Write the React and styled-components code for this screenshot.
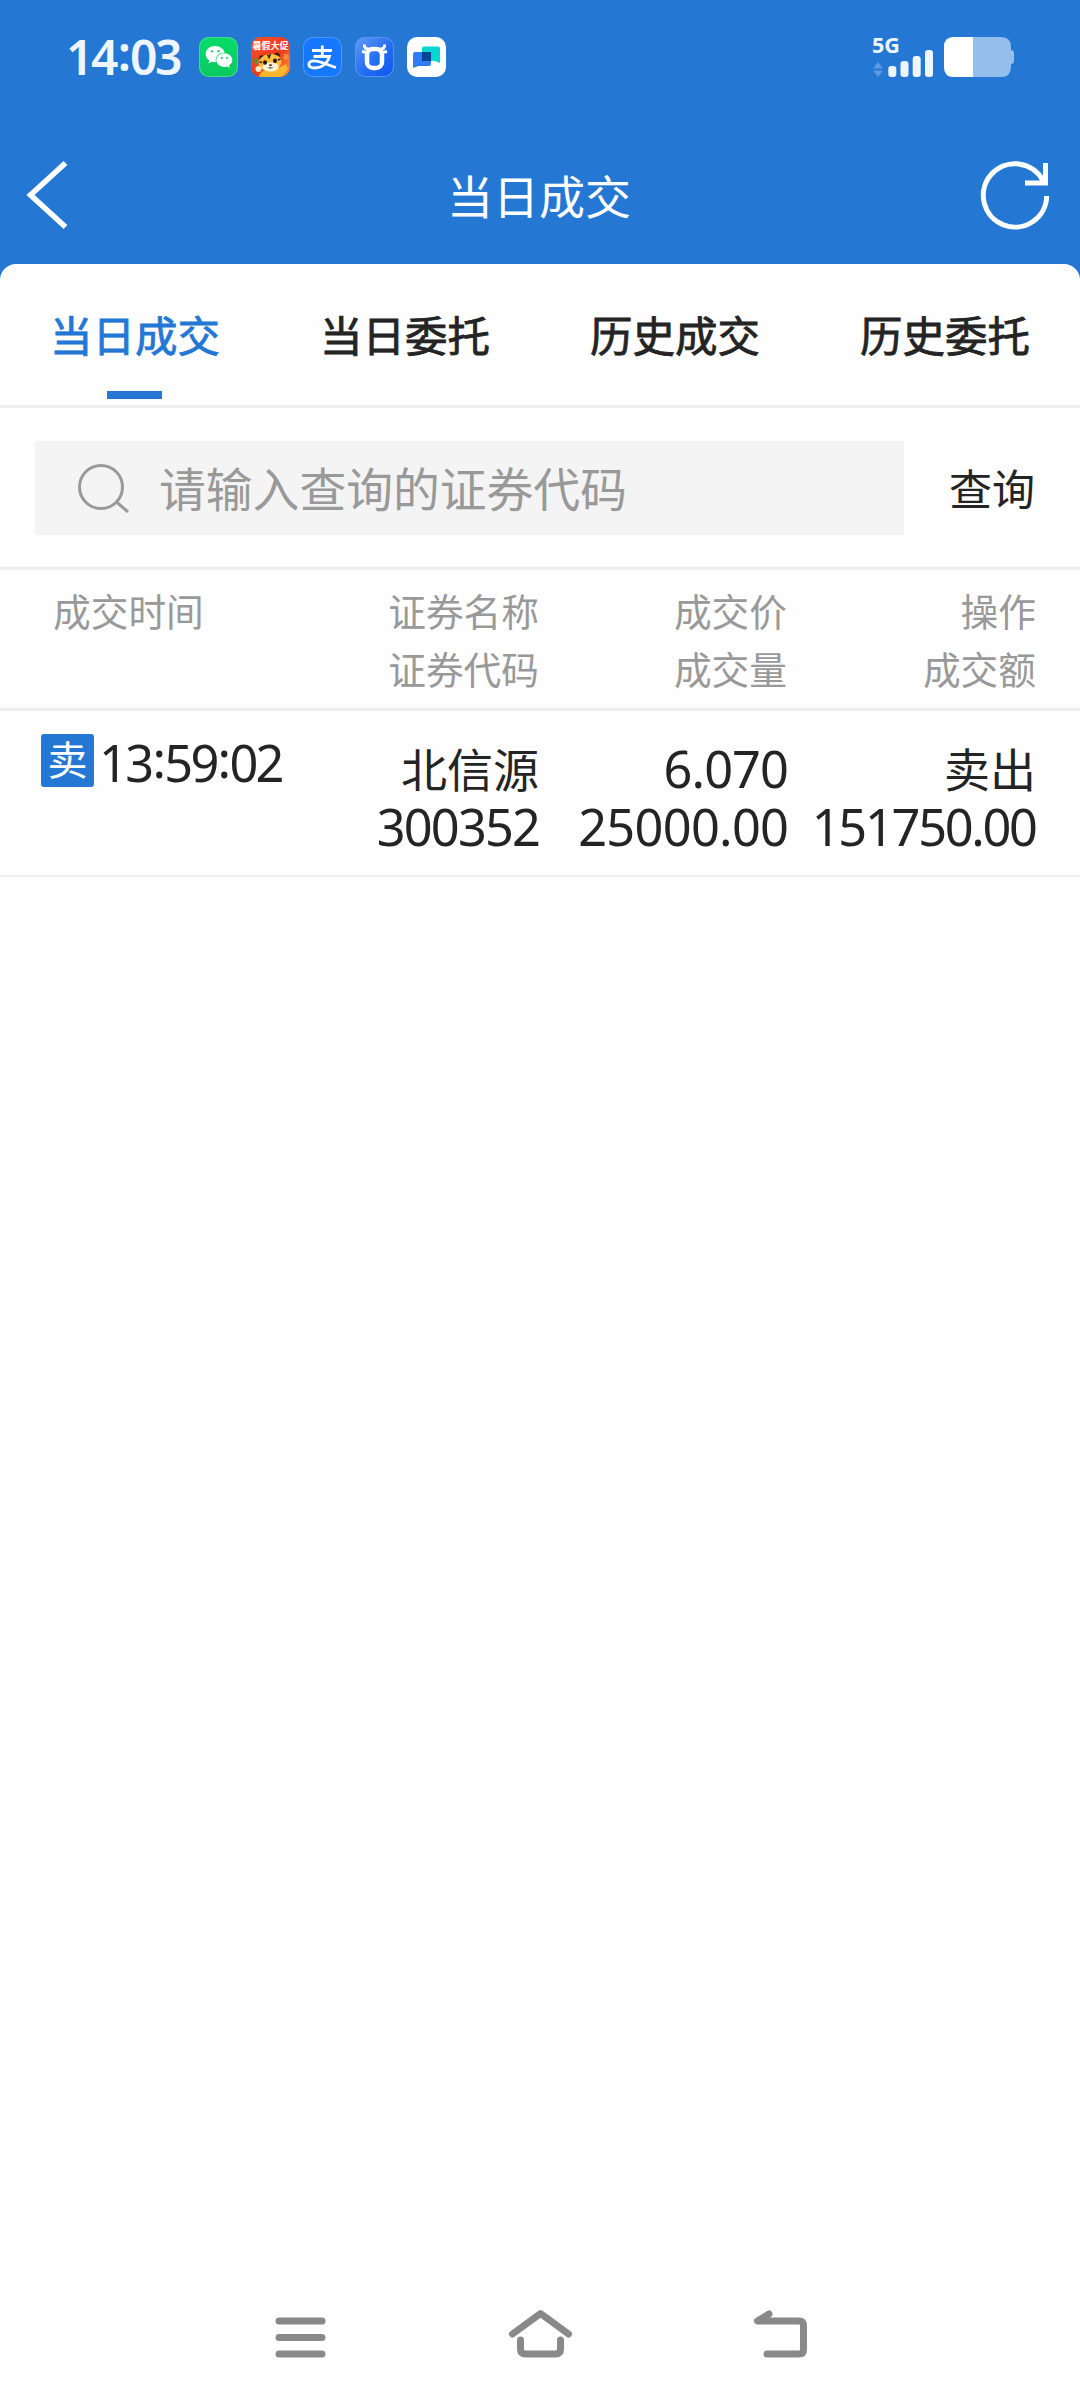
import React from "react";
import styled, { createGlobalStyle } from "styled-components";
import { FaWeixin } from "react-icons/fa";

const Global = createGlobalStyle`
  * { box-sizing: border-box; }
  body {
    margin: 0;
    background: #fefefe;
    color: #242424;
    font-family: "Noto Sans", "Noto Sans CJK SC", sans-serif;
  }
  button { border: 0; padding: 0; background: none; font: inherit; color: inherit; }
`;

const Screen = styled.div`
  width: 1080px;
  height: 2400px;
  display: flex;
  flex-direction: column;
  background: #2577d4;
`;

const StatusBar = styled.div`
  height: 114px;
  padding: 0 66px;
  display: flex;
  justify-content: space-between;
`;

const StatusGroup = styled.div`
  display: flex;
  align-items: center;
`;

const Clock = styled.span`
  width: 133px;
  font-size: 48px;
  line-height: 114px;
  font-weight: 600;
  letter-spacing: -2.4px;
  color: #edf5ff;
`;

const AppIcons = styled.div`
  display: flex;
  gap: 13px;
`;

const AppIcon = styled.div`
  width: 39px;
  height: 40px;
  border-radius: 10px;
  overflow: hidden;
  display: flex;
  align-items: center;
  justify-content: center;
  color: #fff;
  background: ${(p) => p.$bg};
  box-shadow: ${(p) => (p.$rim ? `inset 0 0 0 1px ${p.$rim}` : "none")};
`;

const Signal = styled.div`
  width: 62px;
  height: 40px;
  display: flex;
  flex-direction: column;
  justify-content: space-between;
  margin-right: 9px;
`;

const Header = styled.header`
  height: 150px;
  padding: 0 28px 0 25px;
  display: grid;
  grid-template-columns: 72px 1fr 72px;
  align-items: center;
`;

const HeaderButton = styled.button`
  display: flex;
  justify-content: ${(p) => (p.$end ? "flex-end" : "flex-start")};
  padding-bottom: ${(p) => (p.$end ? 0 : 1)}px;
  margin-top: 12px;
`;

const Title = styled.h1`
  margin: 13px 0 0 1px;
  font-size: 46px;
  line-height: 60px;
  font-weight: 400;
  text-align: center;
  color: #fff;
`;

const Panel = styled.main`
  flex: 1;
  display: flex;
  flex-direction: column;
  background: #fefefe;
  border-radius: 16px 16px 0 0;
`;

const Tabs = styled.nav`
  height: 144px;
  display: grid;
  grid-template-columns: repeat(4, 1fr);
  border-bottom: 3px solid #eee;
`;

const Tab = styled.button`
  display: flex;
  flex-direction: column;
  align-items: center;
  padding-top: 42px;
  font-size: 42.5px;
  line-height: 60px;
  font-weight: 400;
  -webkit-text-stroke: 0.8px currentColor;
  color: ${(p) => (p.$active ? "#2577d4" : "#242424")};
`;

const Underline = styled.span`
  width: 55px;
  height: 8px;
  margin: 25px 1px 0 0;
  background: #2577d4;
`;

const SearchRow = styled.div`
  height: 162px;
  padding: 33px 0 0 35px;
  display: flex;
  border-bottom: 3px solid #eee;
`;

const SearchBox = styled.div`
  width: 869px;
  height: 94px;
  padding-left: 43px;
  display: flex;
  align-items: center;
  gap: 28px;
  background: #f4f4f4;
  color: #999;
  font-size: 46.8px;
  line-height: 94px;
`;

const Placeholder = styled.span`
  padding-top: 2px;
`;

const QueryButton = styled.button`
  flex: 1;
  height: 94px;
  padding-top: 3px;
  font-size: 43px;
  line-height: 91px;
`;

const Columns = styled.div`
  display: grid;
  grid-template-columns: 285px 254px 248px 249px;
`;

const TableHead = styled(Columns)`
  height: 141px;
  padding-top: 13px;
  border-bottom: 3px solid #eee;
  color: #999;
  font-size: 37.7px;
  line-height: 58px;
`;

const Cell = styled.div`
  display: flex;
  flex-direction: column;
  align-items: ${(p) => (p.$start ? "flex-start" : "flex-end")};
  padding-left: ${(p) => (p.$start ? 53 : 0)}px;
  white-space: nowrap;
`;

const TradeRow = styled(Columns)`
  height: 166px;
  padding-top: 29px;
  border-bottom: 2px solid #eee;
  line-height: 58px;
`;

const Name = styled.span`
  font-size: 46px;
`;

const Num = styled.span`
  font-size: 50.5px;
  letter-spacing: ${(p) => p.$track || 0}px;
  margin-right: ${(p) => -2 - (p.$track || 0)}px;
`;

const Raised = styled.span`
  line-height: 0;
  vertical-align: ${(p) => p.$by}px;
  padding: 0 ${(p) => p.$gap || 0}px;
`;

const TimeCell = styled.div`
  display: flex;
  align-items: flex-start;
  gap: 5px;
  padding-left: 41px;
  margin-top: -6px;
  white-space: nowrap;
`;

const Badge = styled.span`
  width: 53px;
  height: 53px;
  border-radius: 3px;
  background: #2577d4;
  color: #fff;
  font-size: 40px;
  line-height: 52px;
  text-align: center;
`;

const NavBar = styled.nav`
  margin-top: auto;
  height: 128px;
  padding: 0 270px;
  display: flex;
  justify-content: space-between;
  align-items: center;
`;

const line = { fill: "none", stroke: "#898989", strokeWidth: 7, strokeLinecap: "round", strokeLinejoin: "round" };

function TigerIcon() {
  return (
    <svg width="39" height="40" viewBox="0 0 39 40">
      <defs>
        <linearGradient id="sale" x1="0" y1="0" x2="1" y2="1">
          <stop offset="0" stopColor="#f4562f" />
          <stop offset=".55" stopColor="#f2371b" />
          <stop offset="1" stopColor="#ff9b36" />
        </linearGradient>
      </defs>
      <rect width="39" height="40" fill="url(#sale)" />
      <path d="M1 21l4 3 0-4 2 5-2 3z" fill="#4c9a35" />
      <circle cx="35" cy="20" r="3" fill="#ff8a3b" />
      <path d="M8 40c1-6 6-8 12-8 8 0 11-3 15-5l2 5-6 8z" fill="#ffb52c" />
      <circle cx="11" cy="21" r="2.800" fill="#33231a" />
      <circle cx="26" cy="18.500" r="2.800" fill="#33231a" />
      <ellipse cx="19" cy="25.500" rx="11.500" ry="8.500" fill="#ffbe3d" transform="rotate(-8 19 25.5)" />
      <ellipse cx="19.500" cy="30" rx="8" ry="4.500" fill="#fff3dc" />
      <path d="M16.500 17.500l1.500 3 1.500-3.500M8.500 25l2.500.5M29.500 22l-2.500 1" stroke="#33231a" strokeWidth="1.500" fill="none" />
      <ellipse cx="14" cy="25.500" rx="2" ry="2.200" fill="#22170f" />
      <ellipse cx="24" cy="23.800" rx="2" ry="2.200" fill="#22170f" />
      <path d="M17.500 27.500h4l-2 2zM16.500 30.500q3 2 6 0" fill="#22170f" />
      <circle cx="7.500" cy="32" r="3" fill="#ffe8c2" />
      <text x="19.500" y="12" textAnchor="middle" fontSize="9" fontWeight="700" fill="#fff">暑假大促</text>
    </svg>
  );
}

function AlipayIcon() {
  return (
    <svg width="39" height="40" viewBox="0 0 39 40" fill="none" stroke="#fff" strokeWidth="2.800">
      <path d="M9 13.500H29M19.300 8.500V19.500M10.500 19.500H26.500C25 25 20 31 12 31C4 31 4 23.800 11 23.800C18 23.800 25 28.500 33 30.500" />
    </svg>
  );
}

function BullIcon() {
  return (
    <svg width="39" height="40" viewBox="0 0 39 40" fill="none" stroke="#fff">
      <rect x="12" y="12" width="15" height="19" rx="6" strokeWidth="4.500" />
      <path d="M9.500 7.500Q9 12.500 14 12M29.500 7.500Q30 12.500 25 12" strokeWidth="3" />
      <path d="M7 14.500L12 15.500M32 14.500L27 15.500" strokeWidth="3" />
    </svg>
  );
}

function ChatIcon() {
  return (
    <svg width="39" height="40" viewBox="0 0 39 40">
      <path d="M15 11.500Q15 9.500 17 9.500H31Q33 9.500 33 11.500V26L28 24H15Z" fill="#05d5d3" />
      <path d="M6 17Q6 15 8 15H24V27Q24 29 22 29H11.500L6 31Z" fill="#2f7df6" />
      <rect x="15" y="15" width="9" height="9" fill="#064394" />
    </svg>
  );
}

function SignalIcon() {
  return (
    <Signal>
      <svg width="62" height="40" viewBox="0 0 62 40" fill="#edf5ff" overflow="visible">
        <text x="-1" y="16" fontSize="21.500" fontWeight="700">5G</text>
        <path d="M0 31.500L5 25L10 31.500ZM0 33.500H10L5 40Z" fill="#5b9be3" />
        <rect x="15.300" y="29" width="8" height="11" rx="3" />
        <rect x="27.500" y="24" width="8" height="16" rx="3" />
        <rect x="39.700" y="19" width="8" height="21" rx="3" />
        <rect x="52" y="13" width="8" height="27" rx="3" />
      </svg>
    </Signal>
  );
}

function BatteryIcon() {
  return (
    <svg width="70" height="40" viewBox="0 0 70 40">
      <path d="M10 0H57Q67 0 67 10V13Q70 13 70 16V24Q70 27 67 27V30Q67 40 57 40H10Q0 40 0 30V10Q0 0 10 0Z" fill="#94bfec" />
      <path d="M29 0H10Q0 0 0 10V30Q0 40 10 40H29Z" fill="#fff" />
    </svg>
  );
}

const tabs = ["当日成交", "当日委托", "历史成交", "历史委托"];
const heads = [["成交时间"], ["证券名称", "证券代码"], ["成交价", "成交量"], ["操作", "成交额"]];

export default function App() {
  return (
    <Screen>
      <Global />
      <StatusBar>
        <StatusGroup>
          <Clock>14<Raised $by={4} $gap={1.5}>:</Raised>03</Clock>
          <AppIcons>
            <AppIcon $bg="linear-gradient(#06dc69, #0bc85f)" $rim="#4bd98f"><FaWeixin size={28} /></AppIcon>
            <AppIcon $bg="#f2371b"><TigerIcon /></AppIcon>
            <AppIcon $bg="#1677ff" $rim="#4c96f5"><AlipayIcon /></AppIcon>
            <AppIcon $bg="linear-gradient(135deg, #659cf5, #2870f4 50%, #0a54f0)" $rim="#5794f2"><BullIcon /></AppIcon>
            <AppIcon $bg="#fff"><ChatIcon /></AppIcon>
          </AppIcons>
        </StatusGroup>
        <StatusGroup>
          <SignalIcon />
          <BatteryIcon />
        </StatusGroup>
      </StatusBar>
      <Header>
        <HeaderButton aria-label="返回">
          <svg width="44" height="70" viewBox="0 0 44 70" fill="none" stroke="#fff" strokeWidth="5.500">
            <path d="M40.500 3L5.500 35L40.500 67" />
          </svg>
        </HeaderButton>
        <Title>当日成交</Title>
        <HeaderButton $end aria-label="刷新">
          <svg width="72" height="72" viewBox="0 0 72 72" fill="none" stroke="#fff" strokeWidth="5">
            <path d="M66.700 37A31.700 31.700 0 1 1 63 21.500" />
            <path d="M65.500 4V24H45" />
          </svg>
        </HeaderButton>
      </Header>
      <Panel>
        <Tabs>
          {tabs.map((t, i) => (
            <Tab key={t} $active={i === 0}>
              {t}
              {i === 0 && <Underline />}
            </Tab>
          ))}
        </Tabs>
        <SearchRow>
          <SearchBox>
            <svg width="53" height="50" viewBox="0 0 53 50" fill="none" stroke="#999" strokeWidth="3">
              <circle cx="23" cy="24" r="21.500" />
              <path d="M38.500 39L50 49" />
            </svg>
            <Placeholder>请输入查询的证券代码</Placeholder>
          </SearchBox>
          <QueryButton>查询</QueryButton>
        </SearchRow>
        <TableHead>
          {heads.map((lines, i) => (
            <Cell key={i} $start={i === 0}>
              {lines.map((l) => <span key={l}>{l}</span>)}
            </Cell>
          ))}
        </TableHead>
        <TradeRow>
          <TimeCell>
            <Badge>卖</Badge>
            <Num $track={-2.7}>13<Raised $by={4} $gap={1}>:</Raised>59<Raised $by={4} $gap={1}>:</Raised>02</Num>
          </TimeCell>
          <Cell>
            <Name>北信源</Name>
            <Num $track={-1.8}>300352</Num>
          </Cell>
          <Cell>
            <Num $track={-0.9}>6.070</Num>
            <Num $track={-0.7}>25000.00</Num>
          </Cell>
          <Cell>
            <Name>卖出</Name>
            <Num $track={-2.3}>151750.00</Num>
          </Cell>
        </TradeRow>
        <NavBar>
          <svg width="60" height="56" viewBox="0 0 60 56" {...line}>
            <path d="M9 13H52M9 29.500H52M9 46H52" />
          </svg>
          <svg width="70" height="56" viewBox="0 0 70 56" {...line}>
            <path d="M7.500 26L35.500 5.500L63.500 26M15.500 32V41Q15.500 46 20.500 46H50.500Q55.500 46 55.500 41V32" />
          </svg>
          <svg width="60" height="56" viewBox="0 0 60 56" {...line}>
            <path d="M19 6L7.500 13H49Q53.500 13 53.500 17.500V41.500Q53.500 46 49 46H17" />
          </svg>
        </NavBar>
      </Panel>
    </Screen>
  );
}
